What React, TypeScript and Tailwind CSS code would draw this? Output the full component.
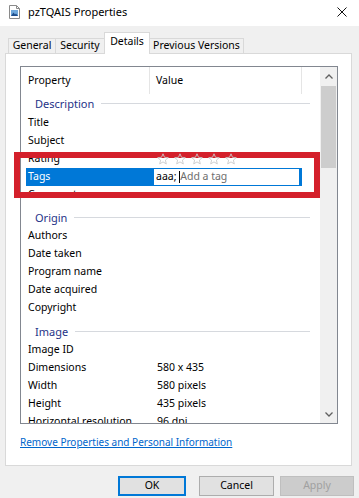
import React from "react";

function FileIcon() {
  return (
    <svg width="11" height="14" viewBox="0 0 11 14">
      <path d="M0.5 0.5 H7.5 L10.5 3.5 V13.5 H0.5 Z" fill="#ffffff" stroke="#8a8a8a" />
      <path d="M7.5 0.5 V3.5 H10.5" fill="none" stroke="#8a8a8a" />
      <rect x="2" y="5" width="7" height="6" fill="#6fa8dc" />
      <path d="M2 11 L4.5 7.5 L6 9.5 L7 8.5 L9 11 Z" fill="#1f4e8c" />
    </svg>
  );
}

function CloseIcon() {
  return (
    <svg width="10" height="10" viewBox="0 0 10 10">
      <path d="M0.5 0.5 L9.5 9.5 M9.5 0.5 L0.5 9.5" stroke="#111" strokeWidth="1" />
    </svg>
  );
}

function Star() {
  return (
    <svg width="12" height="12" viewBox="0 0 12 12">
      <path
        d="M6 0.8 L7.5 4.3 L11.3 4.6 L8.4 7.1 L9.3 10.9 L6 8.9 L2.7 10.9 L3.6 7.1 L0.7 4.6 L4.5 4.3 Z"
        fill="none"
        stroke="#c9c9c9"
        strokeWidth="0.9"
      />
    </svg>
  );
}

function Chevron({ up }: { up?: boolean }) {
  return (
    <svg width="8" height="5" viewBox="0 0 8 5">
      <path
        d={up ? "M0.5 4.5 L4 1 L7.5 4.5" : "M0.5 0.5 L4 4 L7.5 0.5"}
        fill="none"
        stroke="#606060"
        strokeWidth="1.3"
      />
    </svg>
  );
}

function Group({ label, cls }: { label: string; cls: string }) {
  return (
    <div className={`flex items-center pl-[14px] pr-[10px] ${cls}`}>
      <span className="text-[11px] text-[#1e3287] leading-none">{label}</span>
      <div className="flex-1 ml-[7px] h-px bg-[#d6d9de]" />
    </div>
  );
}

function Row({ name, value }: { name: string; value?: string }) {
  return (
    <div className="flex h-[18px] ml-[5px] items-center">
      <div className="w-[127px] pl-[2px] whitespace-nowrap overflow-hidden">{name}</div>
      <div className="pl-[4px] whitespace-nowrap">{value}</div>
    </div>
  );
}

export default function App() {
  return (
    <div className="relative w-[359px] h-[498px] overflow-hidden bg-[#f0f0f0] text-black text-[10.5px] font-['Noto_Sans',sans-serif]">
      {/* Title bar */}
      <div className="h-[26px] bg-white flex items-center">
        <div className="ml-[9px] mt-[-2px]">
          <FileIcon />
        </div>
        <div className="ml-[8px] text-[11px] mt-[-2px]">pzTQAIS Properties</div>
        <div className="ml-auto mr-[12px] mt-[-2px]">
          <CloseIcon />
        </div>
      </div>

      {/* Tabs */}
      <div className="h-[27px] flex items-end pl-[8px]">
        <div className="w-[47px] h-[15px] border-t border-l border-[#d9d9d9] flex items-center justify-center">
          General
        </div>
        <div className="w-[49px] h-[15px] border-t border-l border-[#d9d9d9] flex items-center justify-center">
          Security
        </div>
        <div className="relative z-10 w-[46px] h-[22px] mb-[-1px] bg-white border-t border-l border-r border-[#d9d9d9] flex items-center justify-center pb-[3px]">
          Details
        </div>
        <div className="w-[94px] h-[15px] border-t border-r border-[#d9d9d9] flex items-center justify-center">
          Previous Versions
        </div>
      </div>

      {/* Panel */}
      <div className="ml-[5px] w-[347px] h-[413px] bg-white border border-[#d9d9d9] pt-[12px] pl-[14px]">
        <div className="w-[318px] h-[358px] border border-[#828790] flex">
          <div className="flex-1 overflow-hidden">
            {/* header */}
            <div className="flex h-[27px]">
              <div className="w-[129px] pl-[7px] flex items-center border-r border-[#e5e5e5]">Property</div>
              <div className="w-[152px] pl-[6px] flex items-center border-r border-[#e5e5e5]">Value</div>
            </div>
            <Group label="Description" cls="h-[20px] pb-[1px]" />
            <Row name="Title" />
            <Row name="Subject" />
            <div className="flex h-[18px] ml-[5px] items-center">
              <div className="w-[127px] pl-[2px]">Rating</div>
              <div className="relative z-30 flex gap-[5px] pl-[4px]">
                <Star />
                <Star />
                <Star />
                <Star />
                <Star />
              </div>
            </div>
            <div className="flex h-[18px] ml-[5px]">
              <div className="w-[127px] pl-[2px] bg-[#0078d7] text-white flex items-center">Tags</div>
              <div className="w-[149px] h-full border border-[#0078d7] border-r-[3px] bg-white flex items-center pl-[2px]">
                <span>aaa;&nbsp;</span>
                <span className="w-px h-[12px] bg-black" />
                <span className="text-[#6d6d6d]">Add a tag</span>
              </div>
            </div>
            <Row name="Comments" />
            <Group label="Origin" cls="h-[23px] pt-[3px]" />
            <Row name="Authors" />
            <Row name="Date taken" />
            <Row name="Program name" />
            <Row name="Date acquired" />
            <Row name="Copyright" />
            <Group label="Image" cls="h-[24px] pt-[4px]" />
            <Row name="Image ID" />
            <Row name="Dimensions" value="580 x 435" />
            <Row name="Width" value="580 pixels" />
            <Row name="Height" value="435 pixels" />
            <Row name="Horizontal resolution" value="96 dpi" />
          </div>
          {/* scrollbar */}
          <div className="w-[17px] bg-[#f0f0f0] flex flex-col">
            <div className="h-[19px] flex items-center justify-center">
              <Chevron up />
            </div>
            <div className="h-[82px] mx-[1px] bg-[#cdcdcd]" />
            <div className="flex-1" />
            <div className="h-[17px] flex items-center justify-center">
              <Chevron />
            </div>
          </div>
        </div>
        <div className="mt-[11px] leading-[14px] text-[10px] text-[#0066cc] underline">
          Remove Properties and Personal Information
        </div>
      </div>

      {/* Buttons */}
      <div className="mt-[10px] flex h-[20px]">
        <div className="ml-[118px] w-[68px] h-full bg-[#e1e1e1] border-2 border-[#0078d7] flex items-center justify-center">
          OK
        </div>
        <div className="ml-[13px] w-[75px] h-full bg-[#e1e1e1] border border-[#adadad] flex items-center justify-center">
          Cancel
        </div>
        <div className="ml-[6px] w-[74px] h-full bg-[#cccccc] border border-[#bfbfbf] text-[#a0a0a0] flex items-center justify-center">
          Apply
        </div>
      </div>

      {/* Red highlight annotation */}
      <div className="absolute z-20 left-[14px] top-[152px] w-[306px] h-[46px] border-[6px] border-[#d4202b] pointer-events-none" />
    </div>
  );
}
